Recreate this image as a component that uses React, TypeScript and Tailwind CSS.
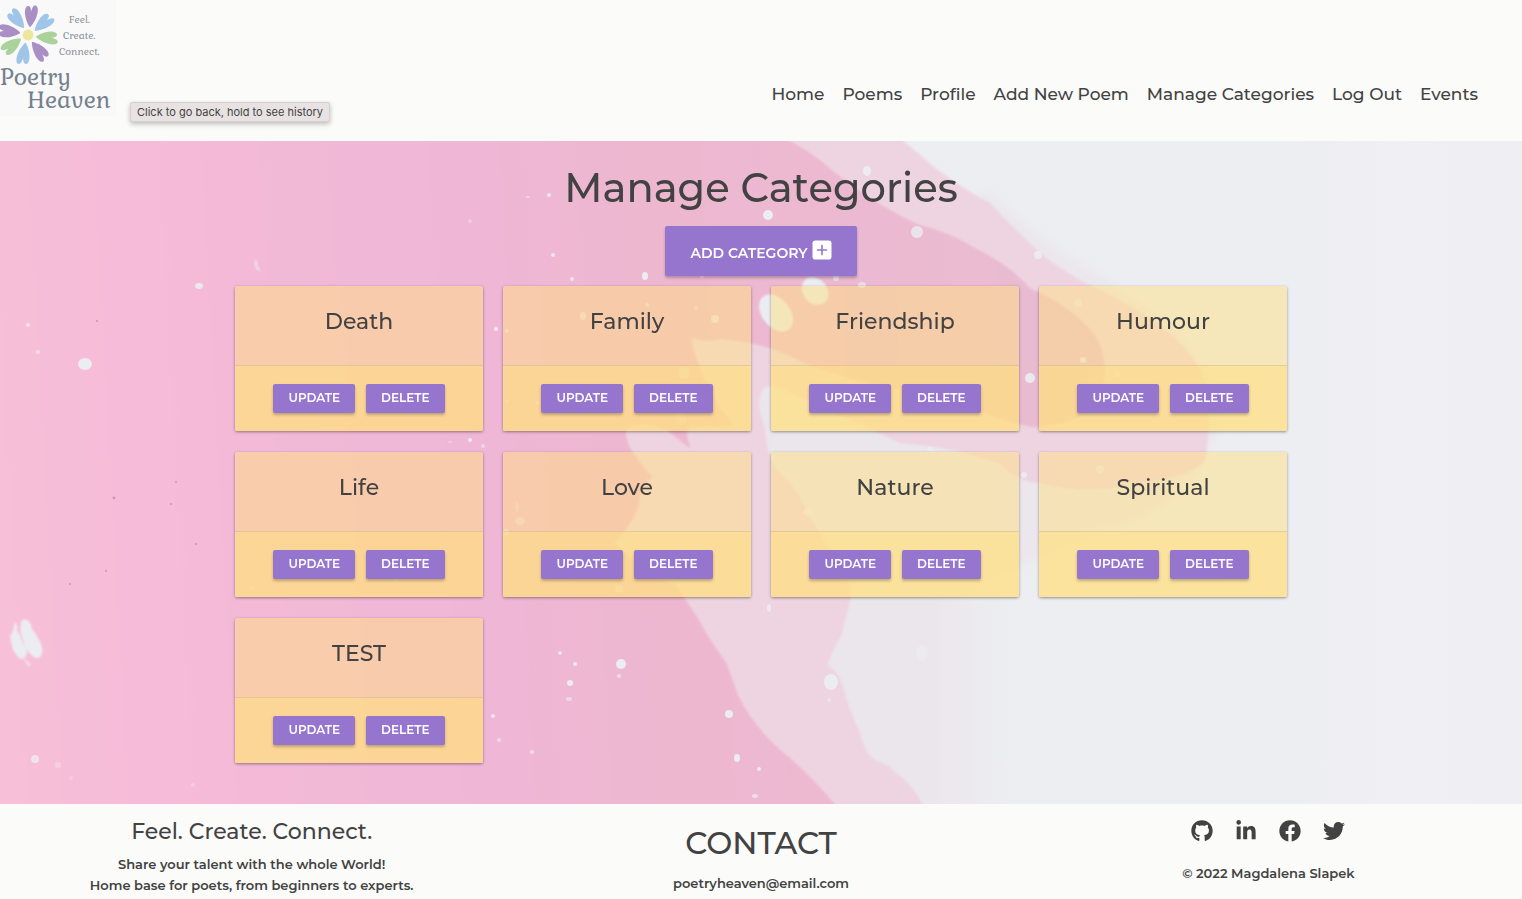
import React from "react";
import { FaGithub, FaLinkedinIn, FaFacebook, FaTwitter } from "react-icons/fa";

const navLinks = ["Home", "Poems", "Profile", "Add New Poem", "Manage Categories", "Log Out", "Events"];
const categories = ["Death", "Family", "Friendship", "Humour", "Life", "Love", "Nature", "Spiritual", "TEST"];

const petals: [number, string][] = [
  [-35, "#9fc6e9"],
  [9, "#a98fc6"],
  [53, "#9fc6e9"],
  [98, "#a9d39b"],
  [145, "#a98fc6"],
  [193, "#9fc6e9"],
  [237, "#a9d39b"],
  [281, "#a98fc6"],
];

// x, y, horizontal radius, vertical radius, opacity
const specks: [number, number, number, number, number][] = [
  [85, 364, 7, 6, 1],
  [28, 325, 2, 2, 0.8],
  [38, 352, 2, 2, 0.7],
  [199, 286, 4, 3, 0.9],
  [496, 329, 2, 2, 1],
  [470, 440, 2, 2, 0.9],
  [483, 446, 2, 2, 0.6],
  [35, 759, 4, 4, 0.8],
  [58, 765, 3, 3, 0.4],
  [71, 778, 2, 2, 0.3],
  [193, 785, 2, 2, 0.4],
  [493, 716, 2, 2, 0.9],
  [499, 740, 2, 2, 0.7],
  [532, 752, 2, 2, 0.7],
  [470, 221, 2, 2, 0.4],
  [549, 195, 2, 2, 0.9],
  [528, 197, 2, 1, 0.6],
  [553, 255, 2, 2, 0.9],
  [572, 279, 2, 2, 0.8],
  [645, 276, 3, 4, 1],
  [702, 276, 2, 2, 0.7],
  [768, 215, 5, 5, 1],
  [867, 171, 4, 5, 1],
  [917, 232, 6, 6, 0.8],
  [836, 278, 3, 3, 0.7],
  [862, 285, 4, 3, 0.7],
  [1030, 378, 5, 5, 0.9],
  [1038, 255, 4, 4, 0.9],
  [1078, 303, 4, 4, 0.7],
  [1083, 360, 3, 3, 0.8],
  [1117, 374, 3, 3, 0.5],
  [583, 316, 3, 4, 0.6],
  [647, 305, 2, 2, 0.6],
  [715, 319, 4, 4, 0.7],
  [696, 308, 2, 2, 0.5],
  [507, 331, 2, 2, 0.6],
  [684, 373, 6, 6, 0.4],
  [681, 419, 6, 6, 0.3],
  [507, 401, 2, 2, 0.4],
  [538, 403, 2, 2, 0.4],
  [520, 521, 5, 4, 0.5],
  [517, 507, 2, 5, 0.3],
  [506, 532, 3, 3, 0.6],
  [619, 589, 4, 4, 0.4],
  [621, 664, 5, 5, 1],
  [619, 676, 2, 2, 0.7],
  [575, 664, 2, 2, 0.9],
  [560, 653, 2, 2, 0.8],
  [570, 683, 3, 3, 1],
  [569, 699, 3, 2, 0.6],
  [729, 714, 4, 4, 1],
  [737, 758, 3, 4, 1],
  [759, 769, 2, 2, 1],
  [755, 796, 3, 2, 0.7],
  [769, 608, 2, 4, 0.8],
  [831, 682, 7, 8, 1],
  [829, 700, 2, 2, 0.6],
  [922, 653, 6, 8, 0.6],
  [1024, 475, 3, 3, 0.9],
  [1100, 469, 4, 4, 0.7],
  [930, 449, 3, 2, 0.8],
  [808, 512, 5, 4, 0.7],
  [252, 588, 2, 2, 0.5],
  [396, 580, 2, 2, 0.8],
  [442, 573, 2, 2, 0.6],
  [450, 442, 2, 1, 0.4],
];

function Logo() {
  return (
    <svg viewBox="0 0 116 116" className="block size-[116px]" role="img" aria-label="Poetry Heaven">
      <rect width="116" height="116" fill="#f9f9fa" />
      {petals.map(([angle, color]) => (
        <path
          key={angle}
          d="M28 26.5 C24.5 22.5 21 15.5 21.2 10.5 C21.3 7.5 23 5.6 24.8 6.4 C26.2 7 26.8 9 27.4 11.2 C27.8 8 28.8 4.2 31 4.6 C35.4 5.6 35 17 29.6 26 C29.2 26.8 28.6 27 28 26.5 Z"
          fill={color}
          transform={`rotate(${angle} 28 35)`}
        />
      ))}
      <circle cx="28" cy="35" r="5.4" fill="#ece59c" />
      <g fill="#8b9199" fontFamily="Gabriela, 'Liberation Serif', serif" fontSize="10">
        <text x="69" y="23">Feel.</text>
        <text x="63" y="39">Create.</text>
        <text x="59" y="55">Connect.</text>
      </g>
      <g fill="#74808d" fontFamily="Gabriela, 'Liberation Serif', serif" fontSize="23">
        <text x="0" y="85">Poetry</text>
        <text x="27" y="108">Heaven</text>
      </g>
    </svg>
  );
}

function Backdrop() {
  return (
    <svg
      viewBox="0 141 1522 663"
      preserveAspectRatio="none"
      className="absolute inset-0 -z-10 size-full"
      aria-hidden="true"
    >
      <defs>
        <linearGradient id="pink" gradientUnits="userSpaceOnUse" x1="0" y1="400" x2="1106" y2="340">
          <stop offset="0" stopColor="#f8bfd8" />
          <stop offset="0.12" stopColor="#f5bbd8" />
          <stop offset="0.42" stopColor="#f0b6d6" />
          <stop offset="0.58" stopColor="#eeb7d0" />
          <stop offset="1" stopColor="#e8bcd2" />
        </linearGradient>
        <linearGradient id="white" x1="0" y1="0" x2="1" y2="0">
          <stop offset="0" stopColor="#ebedf1" />
          <stop offset="0.85" stopColor="#edeef2" />
          <stop offset="0.91" stopColor="#f0eff3" />
          <stop offset="1" stopColor="#efeff3" />
        </linearGradient>
        <linearGradient id="mist" gradientUnits="userSpaceOnUse" x1="930" y1="0" x2="1010" y2="0">
          <stop offset="0" stopColor="#ebe6ec" />
          <stop offset="1" stopColor="#ebe6ec" stopOpacity="0" />
        </linearGradient>
        <filter id="soft" x="-5%" y="-5%" width="110%" height="110%">
          <feGaussianBlur stdDeviation="1" />
        </filter>
        <filter id="haze" x="-10%" y="-10%" width="120%" height="120%">
          <feGaussianBlur stdDeviation="5" />
        </filter>
      </defs>
      <rect y="141" width="1522" height="663" fill="url(#white)" />
      <path d="M985 190 Q1040 240 1090 270 T1180 335 Q1225 390 1215 440 Q1180 520 1090 535 L1010 570 L900 600 L760 380 Z" fill="#ebe7ec" filter="url(#haze)" />
      <path d="M740 370 H1010 V810 H740 Z" fill="url(#mist)" />
      <g filter="url(#soft)">
        <path
          d="M600 130 L890 130 Q915 150 935 168 Q965 190 990 203 Q1010 225 1030 243 Q1045 260 1085 283 Q1140 308 1175 338 Q1208 370 1208 400 Q1210 440 1204 462 Q1180 482 1130 483 Q1095 497 1039 483 Q1019 483 1000 464 Q960 448 900 443 Q830 410 790 393 Q770 382 763 389 Q755 404 765 427 Q767 455 775 468 Q800 490 808 515 Q820 530 826 545 Q850 570 851 598 Q845 620 842 635 Q832 650 828 665 Q842 676 844 690 Q850 712 860 732 Q864 752 875 760 Q890 765 895 772 Q915 785 925 810 L600 810 Z"
          fill="#eed4e1"
        />
        <path
          d="M-10 130 L770 130 Q800 145 820 160 Q870 203 920 225 Q950 232 975 248 Q1010 265 1030 288 Q1070 305 1095 335 Q1112 365 1100 395 Q1080 428 1030 427 Q990 418 965 405 Q920 392 880 387 Q820 371 790 356 Q760 342 720 339 Q705 343 692 338 Q692 350 702 372 Q712 400 733 425 Q715 428 690 426 Q684 432 691 449 Q675 437 667 430 Q645 421 626 429 Q625 440 632 451 Q645 470 653 477 Q640 485 639 505 Q635 520 615 543 Q640 570 675 584 Q686 600 696 615 Q712 644 726 662 Q733 680 738 695 Q755 730 790 758 Q815 780 840 810 L-10 810 Z"
          fill="url(#pink)"
        />
      </g>
      <g fill="#ebedf2" filter="url(#soft)">
        <ellipse cx="776" cy="313" rx="14" ry="21" transform="rotate(-38 776 313)" />
        <ellipse cx="815" cy="291" rx="12" ry="15" transform="rotate(-38 815 291)" />
        <path d="M255 260 Q254 265 258 271 L260 270 Q256 266 257 261 Z" />
        <path d="M22 620 Q30 617 32 629 Q44 644 42 654 Q39 661 32 656 Q25 649 23 640 Q18 628 22 620 Z" />
        <path d="M15 622 Q18 624 17 631 Q21 635 22 642 Q29 649 26 656 Q22 662 18 657 L13 650 L11 642 L10 636 L13 631 Z" />
        <path d="M23 657 L31 665 L28 666 Z" />
      </g>
      {specks.map(([x, y, rx, ry, opacity], i) => (
        <ellipse key={i} cx={x} cy={y} rx={rx} ry={ry} fill="#ebedf2" opacity={opacity} />
      ))}
      <g fill="#cf94b4">
        <circle cx="97" cy="321" r="1" />
        <circle cx="114" cy="498" r="1.4" />
        <circle cx="176" cy="482" r="1" />
        <circle cx="171" cy="504" r="1" />
        <circle cx="106" cy="571" r="1" />
        <circle cx="70" cy="584" r="1" />
        <circle cx="196" cy="544" r="1" />
      </g>
    </svg>
  );
}

const raised = "bg-[#9575cd] font-semibold text-white uppercase rounded-[2px] shadow-[0_2px_3px_rgba(0,0,0,0.25)]";
const cardButton = "h-[29px] px-[15px] pb-[2px] text-[12px]";

function Card({ name }: { name: string }) {
  return (
    <li className="rounded-[2px] bg-[#ffe082]/50 text-center shadow-[0_1px_3px_rgba(0,0,0,0.4)]">
      <h2 className="h-[79px] pt-5 text-[22px] leading-8 font-medium">{name}</h2>
      <div className="flex justify-center gap-[11px] border-t border-[#a0a0a0]/30 bg-[#ffe082]/50 py-[18px]">
        <button type="button" className={`${raised} ${cardButton}`}>Update</button>
        <button type="button" className={`${raised} ${cardButton}`}>Delete</button>
      </div>
    </li>
  );
}

export default function App() {
  return (
    <div className="flex min-h-screen flex-col bg-[#fbfbfa] font-['Montserrat','Inter',sans-serif] text-[#424242]">
      <header className="relative flex h-[141px] justify-between">
        <a href="#home"><Logo /></a>
        <nav className="flex gap-[18px] pt-20 pr-11 text-[17px] leading-7 font-medium">
          {navLinks.map((label) => (
            <a key={label} href="#">{label}</a>
          ))}
        </nav>
        <div role="tooltip" className="absolute top-[102px] left-[130px] rounded-[2px] border border-[#d6d0d1] bg-[#e9e2e3] px-1.5 font-['Inter',sans-serif] text-[11px] leading-[18px] shadow-[0_2px_5px_rgba(0,0,0,0.25)]">
          Click to go back, hold to see history
        </div>
      </header>

      <main className="relative isolate flex flex-1 flex-col items-center px-5 pb-10">
        <Backdrop />
        <h1 className="pt-5 text-[40px] leading-[54px] font-medium">Manage Categories</h1>
        <button type="button" className={`${raised} mt-[11px] flex h-[50px] items-center gap-1 px-[25px] pb-[2px] text-[14px]`}>
          <span className="pt-[6px]">Add Category</span>
          <svg viewBox="0 0 20 20" className="size-5" aria-hidden="true">
            <rect x="0.5" y="0.5" width="19" height="19" rx="2.8" fill="#fff" />
            <path d="M10 5.6v9M5.5 10h9" stroke="#9575cd" strokeWidth="1.6" strokeLinecap="round" />
          </svg>
        </button>
        <ul className="mt-[10px] grid w-full max-w-[1052px] grid-cols-4 gap-x-5 gap-y-[21px]">
          {categories.map((name) => (
            <Card key={name} name={name} />
          ))}
        </ul>
      </main>

      <footer className="grid h-[95px] grid-cols-3 text-center text-[13px] font-semibold">
        <div className="pt-3 pr-1">
          <h2 className="text-[22px] leading-8 font-medium">Feel. Create. Connect.</h2>
          <p className="pt-[6px] leading-[21px]">Share your talent with the whole World!<br />Home base for poets, from beginners to experts.</p>
        </div>
        <div className="pt-[19px]">
          <h2 className="text-[31px] leading-10 font-medium">CONTACT</h2>
          <p className="pt-[10px] leading-[21px]">poetryheaven@email.com</p>
        </div>
        <div className="pt-4">
          <div className="flex justify-center gap-[22px]">
            <a href="#github" aria-label="GitHub"><FaGithub size={22} /></a>
            <a href="#linkedin" aria-label="LinkedIn"><FaLinkedinIn size={22} /></a>
            <a href="#facebook" aria-label="Facebook"><FaFacebook size={22} /></a>
            <a href="#twitter" aria-label="Twitter"><FaTwitter size={22} /></a>
          </div>
          <p className="pt-[21px] leading-[21px]">© 2022 Magdalena Slapek</p>
        </div>
      </footer>
    </div>
  );
}
